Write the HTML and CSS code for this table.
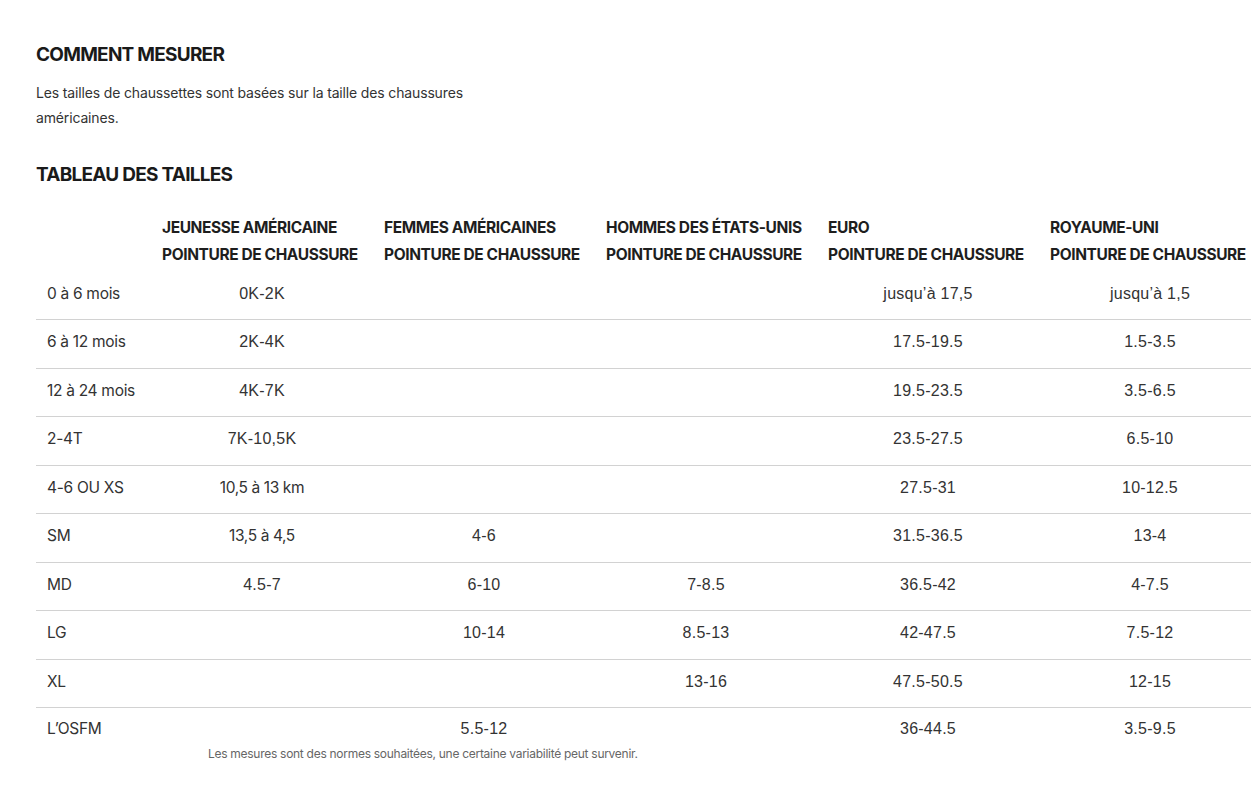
FILE: index.html
```html
<!DOCTYPE html>
<html lang="fr">
<head>
<meta charset="utf-8">
<title>Guide des tailles</title>
<link rel="stylesheet" href="styles.css">
</head>
<body>
<main class="page">
  <section class="measure">
    <h2 class="title">COMMENT MESURER</h2>
    <p class="intro">Les tailles de chaussettes sont basées sur la taille des chaussures américaines.</p>
  </section>
  <section class="chart">
    <h2 class="title">TABLEAU DES TAILLES</h2>
    <table class="sizes">
      <thead>
        <tr>
          <th class="label"></th>
          <th>JEUNESSE AMÉRICAINE<br>POINTURE DE CHAUSSURE</th>
          <th>FEMMES AMÉRICAINES<br>POINTURE DE CHAUSSURE</th>
          <th>HOMMES DES ÉTATS-UNIS<br>POINTURE DE CHAUSSURE</th>
          <th>EURO<br>POINTURE DE CHAUSSURE</th>
          <th>ROYAUME-UNI<br>POINTURE DE CHAUSSURE</th>
        </tr>
      </thead>
      <tbody>
        <tr><td class="label">0 à 6 mois</td><td>0K-2K</td><td></td><td></td><td>jusqu’à 17,5</td><td>jusqu’à 1,5</td></tr>
        <tr><td class="label">6 à 12 mois</td><td>2K-4K</td><td></td><td></td><td>17.5-19.5</td><td>1.5-3.5</td></tr>
        <tr><td class="label">12 à 24 mois</td><td>4K-7K</td><td></td><td></td><td>19.5-23.5</td><td>3.5-6.5</td></tr>
        <tr><td class="label">2-4T</td><td>7K-10,5K</td><td></td><td></td><td>23.5-27.5</td><td>6.5-10</td></tr>
        <tr><td class="label">4-6 OU XS</td><td class="text">10,5 à 13 km</td><td></td><td></td><td>27.5-31</td><td>10-12.5</td></tr>
        <tr><td class="label">SM</td><td class="text">13,5 à 4,5</td><td>4-6</td><td></td><td>31.5-36.5</td><td>13-4</td></tr>
        <tr><td class="label">MD</td><td>4.5-7</td><td>6-10</td><td>7-8.5</td><td>36.5-42</td><td>4-7.5</td></tr>
        <tr><td class="label">LG</td><td></td><td>10-14</td><td>8.5-13</td><td>42-47.5</td><td>7.5-12</td></tr>
        <tr><td class="label">XL</td><td></td><td></td><td>13-16</td><td>47.5-50.5</td><td>12-15</td></tr>
        <tr class="last"><td class="label">L’OSFM</td><td></td><td>5.5-12</td><td></td><td>36-44.5</td><td>3.5-9.5</td></tr>
      </tbody>
    </table>
    <p class="note">Les mesures sont des normes souhaitées, une certaine variabilité peut survenir.</p>
  </section>
</main>
</body>
</html>
```

FILE: styles.css
```css
html, body {
  margin: 0;
  padding: 0;
  background: #ffffff;
  overflow-x: hidden;
}

body {
  font-family: "Inter", "Roboto", "Liberation Sans", sans-serif;
  color: #333333;
}

.page {
  padding: 43px 0 40px 36px;
  width: 1225px;
}

.title {
  margin: 0;
  font-size: 19px;
  line-height: 24px;
  font-weight: 700;
  color: #1a1a1a;
  letter-spacing: -0.75px;
}

.intro {
  margin: 12.5px 0 0;
  width: 440px;
  font-size: 14px;
  line-height: 25px;
  letter-spacing: -0.15px;
  color: #333333;
}

.chart {
  margin-top: 33.5px;
}

.sizes {
  margin-top: 16px;
  border-collapse: collapse;
  table-layout: fixed;
  width: 1225px;
}

.sizes th {
  width: 211px;
  padding: 10.5px 0 4px 11px;
  text-align: left;
  font-size: 15.5px;
  line-height: 27px;
  font-weight: 700;
  color: #1e1e1e;
  letter-spacing: -0.4px;
  white-space: nowrap;
  vertical-align: top;
}

.sizes th.label {
  width: 104px;
}

.sizes td {
  padding: 10px 0 14px 0;
  text-align: center;
  font-family: "Liberation Sans", "Arial", sans-serif;
  font-size: 16px;
  line-height: 23.5px;
  letter-spacing: 0.25px;
  color: #333333;
  white-space: nowrap;
}

.sizes td.text {
  font-family: "Inter", "Roboto", sans-serif;
  font-size: 15.5px;
  letter-spacing: -0.4px;
}

.sizes td.label {
  padding-left: 11px;
  text-align: left;
  font-family: "Inter", "Roboto", sans-serif;
  font-size: 15.5px;
  letter-spacing: -0.3px;
}

.sizes tbody tr {
  border-bottom: 1px solid #d2d2d2;
}

.sizes tbody tr.last {
  border-bottom: none;
}

.sizes tbody tr.last td {
  padding-top: 9px;
  padding-bottom: 4px;
}

.note {
  margin: 1px 0 0 172px;
  font-size: 12px;
  line-height: 16px;
  letter-spacing: -0.28px;
  color: #666666;
}
```
